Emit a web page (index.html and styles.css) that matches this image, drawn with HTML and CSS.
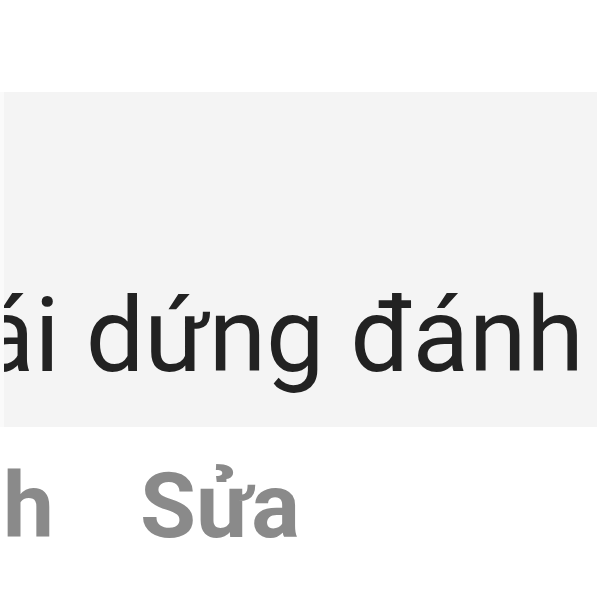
FILE: index.html
```html
<!DOCTYPE html>
<html lang="vi">
<head>
  <meta charset="UTF-8" />
  <meta name="viewport" content="width=device-width, initial-scale=1.0"/>
  <title>Sửa</title>
  <link rel="stylesheet" href="styles.css">
</head>
<body>
  <div class="panel">
    <div class="phrase">ái dứng đánh</div>
  </div>

  <div class="actions">
    <span class="action">h</span>
    <span class="action">Sửa</span>
  </div>
</body>
</html>
```

FILE: styles.css
```css
* { box-sizing: border-box; }

body {
  margin: 0;
  background: #fff;
  font-family: Roboto, "Noto Sans", sans-serif;
  overflow: hidden;
}

.panel {
  margin: 92px 3px 0 0;
  height: 335px;
  padding-top: 192px;
  background: #f4f4f4;
  border-left: 4px solid #fafafa;
  overflow: hidden;
}

.phrase {
  margin-left: -26px;
  font-size: 104px;
  line-height: 1;
  color: #222;
  white-space: nowrap;
}

.actions {
  display: flex;
  gap: 86px;
  margin-top: 34px;
  padding-left: 3px;
  font-size: 91px;
  font-weight: 700;
  line-height: 1;
  color: #8a8a8a;
}
```
